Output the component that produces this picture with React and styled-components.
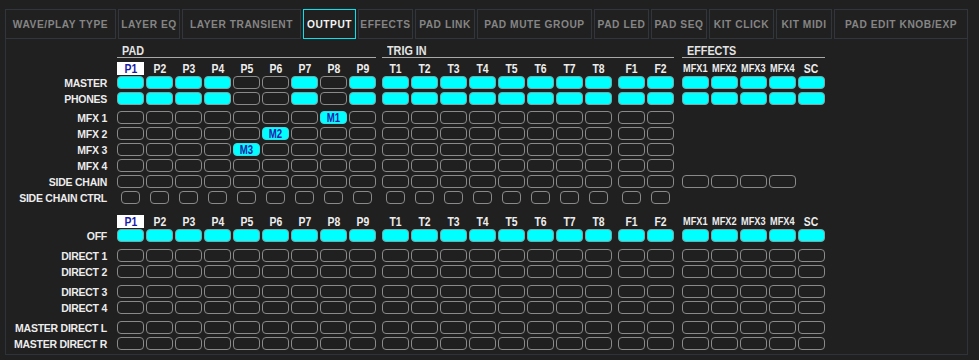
import React from 'react';
import styled, { createGlobalStyle } from 'styled-components';

const GlobalStyle = createGlobalStyle`
	body {
		margin: 0;
		background: #202020;
		font-family: "Liberation Sans", Arial, sans-serif;
	}
`;

/**
 * Page wrapper.
 */
const Page = styled.div`
	width: 979px;
	height: 360px;
	box-sizing: border-box;
	padding: 9px 0 0 5px;
	background: #202020;
`;

const TabBar = styled.div`
	display: flex;
	gap: 2px;
`;

const Tab = styled.div`
	width: ${props => props.$width}px;
	height: 30px;
	box-sizing: border-box;
	border: 1px solid ${props => props.$active ? '#00e5ee' : '#30363c'};
	display: flex;
	align-items: center;
	justify-content: center;
	font-size: 10.2px;
	font-weight: bold;
	letter-spacing: 0.55px;
	color: ${props => props.$active ? '#f2f2f2' : '#858585'};
	white-space: nowrap;
`;

const Panel = styled.div`
	width: 963px;
	height: 316px;
	box-sizing: border-box;
	border: 1px solid #2d3339;
	border-top: none;
	padding: 4px 0 0 1px;
`;

const Row = styled.div`
	display: flex;
	align-items: center;
	height: 13px;
	margin-top: ${props => props.$top || 3}px;
`;

const RowLabel = styled.div`
	width: 100px;
	margin-right: 10px;
	text-align: right;
	font-size: 10.5px;
	font-weight: bold;
	letter-spacing: -0.25px;
	color: #ececec;
	white-space: nowrap;
	line-height: 13px;
	padding-top: 1px;
`;

const Group = styled.div`
	display: flex;
	gap: 2px;
	margin-left: ${props => props.$offset}px;
`;

const Cell = styled.div`
	width: 27px;
	height: 13px;
	box-sizing: border-box;
	border: 1px solid ${props => props.$tag ? '#3fd8e0' : props.$on ? '#7aa8a8' : '#8a8a8a'};
	border-radius: 4px;
	background: ${props => props.$on ? '#00ffff' : 'transparent'};
	display: flex;
	align-items: center;
	justify-content: center;
`;

const Slot = styled.div`
	width: 27px;
	height: 13px;
	display: flex;
	justify-content: center;
`;

const SmallCell = styled.div`
	width: 19px;
	height: 13px;
	box-sizing: border-box;
	border: 1px solid #8a8a8a;
	border-radius: 4px;
`;

const Cond = styled.span`
	display: inline-block;
	transform: scaleX(0.8);
	font-weight: bold;
	font-size: ${props => props.$size || 13.5}px;
	line-height: 1;
`;

const SectionRow = styled.div`
	display: flex;
	padding-left: 110px;
`;

const Section = styled.div`
	width: ${props => props.$width}px;
	margin-left: ${props => props.$offset}px;
	height: 14px;
	border-bottom: 1px solid #a8a8a8;
	color: #e4e4e4;
	line-height: 14px;
	span {
		transform-origin: left center;
		margin-left: 5px;
	}
`;

const ColLabel = styled.div`
	width: 27px;
	height: 13px;
	display: flex;
	align-items: center;
	justify-content: center;
	background: ${props => props.$sel ? '#ffffff' : 'transparent'};
	color: ${props => props.$sel ? '#1b1ba8' : '#ededed'};
`;

const TagText = styled(Cond)`
	color: #1b1ba8;
	font-size: 12px;
`;

const range = (p, n) => Array.from({ length: n }, (_, i) => p + (i + 1));

const GROUPS = [
	{ id: 'pad', cols: range('P', 9), offset: 0 },
	{ id: 'trig', cols: range('T', 8), offset: 6 },
	{ id: 'f', cols: range('F', 2), offset: 6 },
	{ id: 'fx', cols: ['MFX1', 'MFX2', 'MFX3', 'MFX4', 'SC'], offset: 8 },
];

const TABS = [
	['WAVE/PLAY TYPE', 111],
	['LAYER EQ', 62],
	['LAYER TRANSIENT', 119],
	['OUTPUT', 53],
	['EFFECTS', 55],
	['PAD LINK', 60],
	['PAD MUTE GROUP', 115],
	['PAD LED', 55],
	['PAD SEQ', 56],
	['KIT CLICK', 65],
	['KIT MIDI', 56],
	['PAD EDIT KNOB/EXP', 134],
];

const fill = (n, v) => Array(n).fill(v);
const allOn = [fill(9, 1), fill(8, 1), fill(2, 1), fill(5, 1)];
const allOff = [fill(9, 0), fill(8, 0), fill(2, 0), fill(5, 0)];
const mainOut = [[1, 1, 1, 1, 0, 0, 1, 0, 1], fill(8, 1), fill(2, 1), fill(5, 1)];
const mfx = (idx, tag) => {
	const pads = fill(9, 0);
	if (idx >= 0) pads[idx] = tag;
	return [pads, fill(8, 0), fill(2, 0)];
};

function Cells({ values, small }) {
	return GROUPS.map((g, gi) => {
		const vals = values[gi];
		if (!vals) return null;
		return (
			<Group key={g.id} $offset={g.offset}>
				{vals.map((v, i) => {
					if (small) {
						return <Slot key={i}><SmallCell /></Slot>;
					}
					if (typeof v === 'string') {
						return <Cell key={i} $on $tag><TagText>{v}</TagText></Cell>;
					}
					return <Cell key={i} $on={!!v} />;
				})}
			</Group>
		);
	});
}

function MatrixRow({ label, values, small, top }) {
	return (
		<Row $top={top}>
			<RowLabel>{label}</RowLabel>
			<Cells values={values} small={small} />
		</Row>
	);
}

function ColumnLabels({ top }) {
	return (
		<Row $top={top}>
			<RowLabel />
			{GROUPS.map(g => (
				<Group key={g.id} $offset={g.offset}>
					{g.cols.map(c => (
						<ColLabel key={c} $sel={c === 'P1'}>
							<Cond $size={c.length > 2 ? 11.5 : 13}>{c}</Cond>
						</ColLabel>
					))}
				</Group>
			))}
		</Row>
	);
}

export default function App() {
	return (
		<Page>
			<GlobalStyle />
			<TabBar>
				{TABS.map(([name, w]) => (
					<Tab key={name} $width={w} $active={name === 'OUTPUT'}>{name}</Tab>
				))}
			</TabBar>
			<Panel>
				<SectionRow>
					<Section $width={259} $offset={0}><Cond>PAD</Cond></Section>
					<Section $width={292} $offset={6}><Cond>TRIG IN</Cond></Section>
					<Section $width={143} $offset={8}><Cond>EFFECTS</Cond></Section>
				</SectionRow>
				<ColumnLabels top={4} />
				<MatrixRow label="MASTER" values={mainOut} top={1} />
				<MatrixRow label="PHONES" values={mainOut} />
				<MatrixRow label="MFX 1" values={mfx(7, 'M1')} top={6} />
				<MatrixRow label="MFX 2" values={mfx(5, 'M2')} />
				<MatrixRow label="MFX 3" values={mfx(4, 'M3')} />
				<MatrixRow label="MFX 4" values={mfx(-1)} />
				<MatrixRow label="SIDE CHAIN" values={[fill(9, 0), fill(8, 0), fill(2, 0), fill(4, 0)]} />
				<MatrixRow label="SIDE CHAIN CTRL" values={[fill(9, 0), fill(8, 0), fill(2, 0)]} small />
				<ColumnLabels top={11} />
				<MatrixRow label="OFF" values={allOn} top={1} />
				<MatrixRow label="DIRECT 1" values={allOff} top={7} />
				<MatrixRow label="DIRECT 2" values={allOff} />
				<MatrixRow label="DIRECT 3" values={allOff} top={7} />
				<MatrixRow label="DIRECT 4" values={allOff} />
				<MatrixRow label="MASTER DIRECT L" values={allOff} top={7} />
				<MatrixRow label="MASTER DIRECT R" values={allOff} />
			</Panel>
		</Page>
	);
}
